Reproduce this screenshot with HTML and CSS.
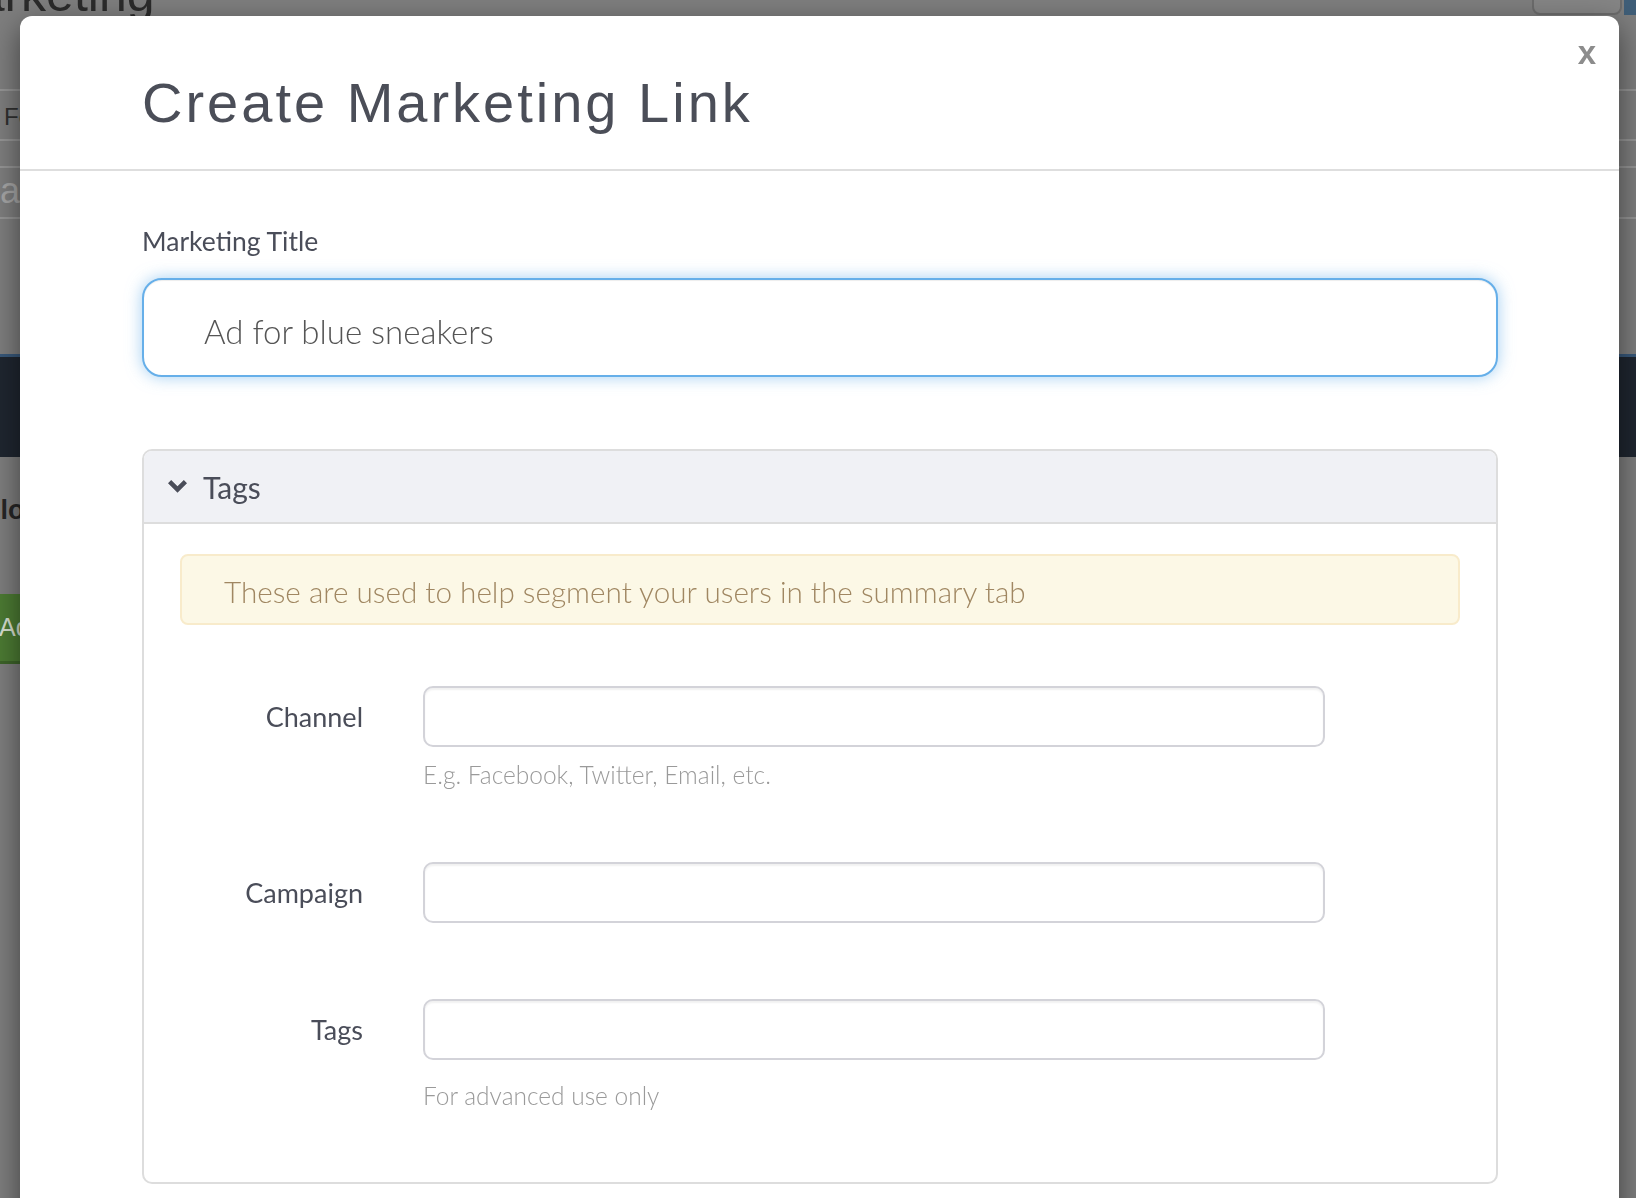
FILE: index.html
```html
<!DOCTYPE html>
<html lang="en">
<head>
<meta charset="utf-8">
<title>Create Marketing Link</title>
<link rel="stylesheet" href="styles.css">
</head>
<body>
<div class="page" aria-hidden="true">
  <header class="page-head">
    <h1 class="page-title">Marketing</h1>
    <div class="page-actions">
      <span class="ghost-btn"></span>
      <span class="blue-btn"></span>
    </div>
  </header>
  <nav class="page-tabs"><span class="tab">Features</span></nav>
  <div class="page-search"><span class="placeholder">Search</span></div>
  <div class="page-band"></div>
  <div class="page-sub">Flows</div>
  <div class="page-add"><span>Add</span></div>
</div>

<div class="modal-layer">
  <div class="modal" role="dialog" aria-labelledby="modal-title">
    <button class="close" type="button">x</button>
    <div class="modal-header">
      <h2 class="modal-title" id="modal-title">Create Marketing Link</h2>
    </div>
    <div class="modal-body">
      <label class="field-label" for="mt">Marketing Title</label>
      <input id="mt" class="title-input" type="text" value="Ad for blue sneakers">

      <section class="panel">
        <div class="panel-heading">
          <svg class="chev" viewBox="0 0 19 13" width="19" height="13" aria-hidden="true"><polygon points="0,3.2 3.2,0 9.5,6.3 15.8,0 19,3.2 9.5,12.7"/></svg>
          <span>Tags</span>
        </div>
        <div class="panel-body">
          <div class="alert">These are used to help segment your users in the summary tab</div>

          <div class="form-row">
            <label class="row-label" for="ch">Channel</label>
            <input id="ch" class="row-input" type="text">
            <p class="help">E.g. Facebook, Twitter, Email, etc.</p>
          </div>

          <div class="form-row">
            <label class="row-label" for="cp">Campaign</label>
            <input id="cp" class="row-input" type="text">
          </div>

          <div class="form-row">
            <label class="row-label" for="tg">Tags</label>
            <input id="tg" class="row-input" type="text">
            <p class="help help-wide">For advanced use only</p>
          </div>
        </div>
      </section>
    </div>
  </div>
</div>
</body>
</html>
```

FILE: styles.css
```css
* { box-sizing: border-box; }

html, body {
  margin: 0;
  height: 100%;
}

body {
  background: #7e7e7e;
  overflow: hidden;
  font-family: "Lato", "Open Sans", sans-serif;
}

/* ---------- dimmed page behind the dialog ---------- */
.page {
  display: flex;
  flex-direction: column;
  color: #2b2b2b;
  font-family: "Liberation Sans", Arial, sans-serif;
}

.page-head {
  height: 46px;
  margin-top: -30px;
  display: flex;
  justify-content: space-between;
  align-items: flex-start;
}

.page-title {
  margin: 0 0 0 -65px;
  font-size: 50px;
  font-weight: 400;
  line-height: 48px;
  color: #2b2b2b;
}

.page-actions {
  display: flex;
  align-self: flex-end;
  margin-bottom: 1px;
  gap: 2px;
}

.ghost-btn {
  width: 90px;
  height: 50px;
  border: 2px solid #6c6c6c;
  border-radius: 8px;
  background: #858585;
}

.blue-btn {
  width: 12px;
  height: 50px;
  background: #3f5e78;
}

.page-tabs {
  margin-top: 73px;
  height: 52px;
  border-top: 2px solid #959595;
  border-bottom: 2px solid #959595;
  padding: 3px 0 0 4px;
  font-size: 24px;
  line-height: 45px;
  color: #303030;
}

.page-search {
  margin-top: 25px;
  height: 53px;
  border-top: 2px solid #959595;
  border-bottom: 2px solid #959595;
  font-size: 36px;
  line-height: 46px;
  color: #a6a6a6;
  overflow: hidden;
  white-space: nowrap;
}

.page-search .placeholder {
  margin-left: -44px;
}

.page-band {
  margin-top: 135px;
  height: 103px;
  background: #1f2630;
  border-top: 3px solid #38587a;
}

.page-sub {
  margin-top: 38px;
  margin-left: -16px;
  font-size: 27px;
  font-weight: 700;
  line-height: 30px;
  color: #262626;
}

.page-add {
  margin-top: 69px;
  width: 200px;
  height: 70px;
  margin-left: -20px;
  padding-left: 19px;
  background: #4c7b33;
  border-bottom: 3px solid #3d6429;
  border-radius: 6px;
  color: #d7dfd0;
  font-size: 25px;
  line-height: 66px;
}

/* ---------- dialog ---------- */
.modal-layer {
  position: fixed;
  inset: 0;
}

.modal {
  position: relative;
  margin: 16px 0 0 20px;
  width: 1599px;
  background: #fff;
  border-radius: 12px 12px 0 0;
  box-shadow: 0 10px 30px rgba(0, 0, 0, 0.5);
}

.close {
  position: absolute;
  top: 20px;
  right: 23px;
  padding: 0;
  border: 0;
  background: none;
  font-family: "Liberation Sans", Arial, sans-serif;
  font-size: 33px;
  font-weight: 700;
  line-height: 33px;
  color: #8c8c8c;
  cursor: pointer;
}

.modal-header {
  padding: 55px 122px 34px;
  border-bottom: 2px solid #dedede;
}

.modal-title {
  margin: 0;
  font-family: "Liberation Sans", Arial, sans-serif;
  font-size: 56px;
  font-weight: 400;
  line-height: 64px;
  letter-spacing: 3px;
  color: #4b4e58;
}

.modal-body {
  padding: 52px 122px 60px;
  display: flex;
  flex-direction: column;
  align-items: flex-start;
}

.field-label {
  display: block;
  font-size: 26.5px;
  line-height: 36px;
  color: #4a4d59;
  margin-bottom: 19px;
}

.title-input {
  width: 1356px;
  height: 99px;
  padding: 6px 20px 0 60px;
  border: 2px solid #66afe9;
  border-radius: 20px;
  box-shadow: inset 0 1px 1px rgba(0, 0, 0, 0.075), 0 0 16px rgba(102, 175, 233, 0.6);
  font-family: "Lato", sans-serif;
  font-size: 33px;
  font-weight: 300;
  color: #555;
  outline: none;
  margin-bottom: 72px;
}

.panel {
  width: 1356px;
  border: 2px solid #dddddd;
  border-radius: 10px;
  overflow: hidden;
}

.panel-heading {
  height: 73px;
  display: flex;
  align-items: center;
  gap: 16px;
  padding-left: 24px;
  background: #f0f1f5;
  border-bottom: 2px solid #dddddd;
  font-size: 30px;
  line-height: 36px;
  color: #4a4d59;
}

.chev {
  fill: #4a4d59;
  flex: none;
}

.panel-body {
  padding: 30px 36px 72px;
}

.alert {
  height: 71px;
  display: flex;
  align-items: center;
  padding: 4px 0 0 42px;
  background: #fcf8e6;
  border: 2px solid #f8ebcb;
  border-radius: 8px;
  font-size: 29.7px;
  font-weight: 300;
  line-height: 40px;
  color: #a08762;
  margin-bottom: 61px;
}

.form-row {
  display: grid;
  grid-template-columns: 183px 902px;
  column-gap: 60px;
  align-items: center;
}

.form-row + .form-row {
  margin-top: 76px;
}

.row-label {
  text-align: right;
  font-size: 27px;
  line-height: 36px;
  color: #4a4d59;
}

.row-input {
  height: 61px;
  border: 2px solid #d3d3d9;
  border-radius: 10px;
  box-shadow: inset 0 2px 2px rgba(0, 0, 0, 0.06);
  outline: none;
  font-family: "Lato", sans-serif;
  font-size: 28px;
  padding: 0 24px;
}

.help {
  grid-column: 2;
  margin: 14px 0 -3px;
  font-size: 24.5px;
  font-weight: 300;
  line-height: 28px;
  color: #9a9a9a;
}

.help-wide {
  margin-top: 22px;
  margin-bottom: 0;
}
```
